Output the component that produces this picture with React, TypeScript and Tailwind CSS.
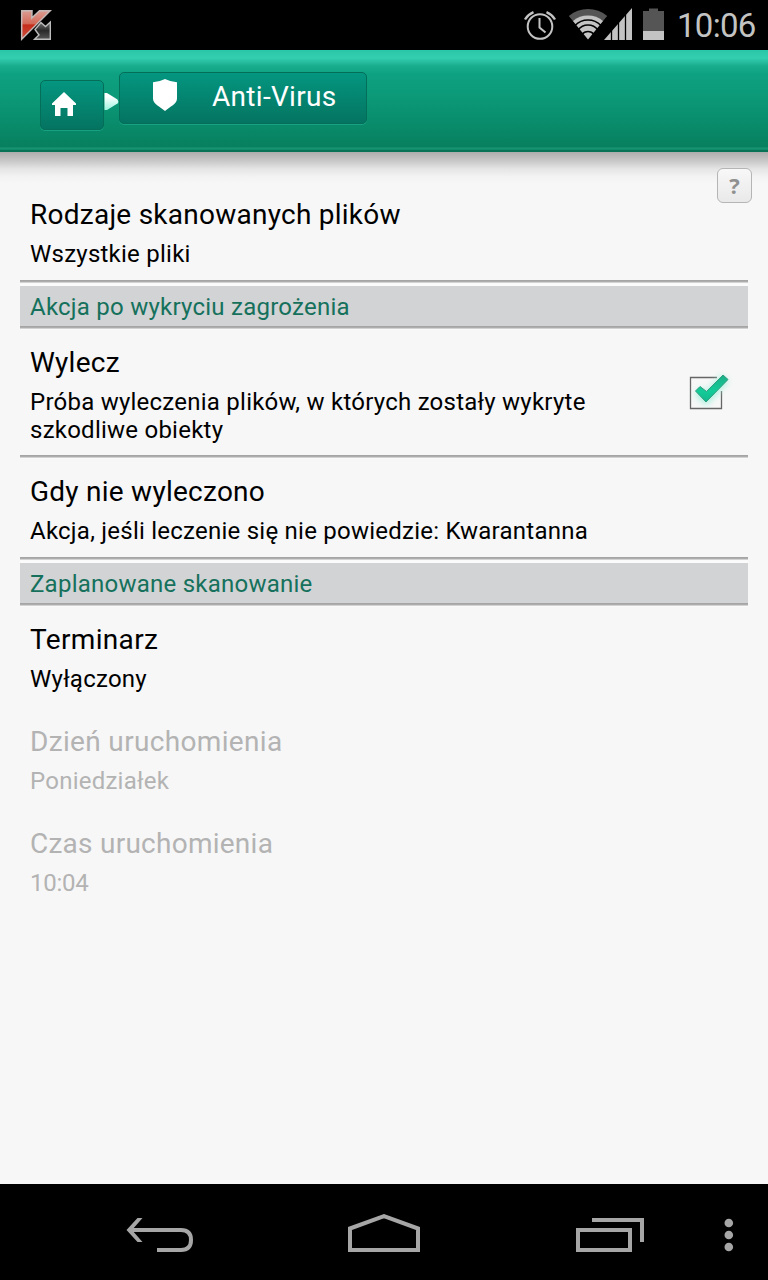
import React from "react";

type RowProps = {
  title: string;
  summary: React.ReactNode;
  titleTracking?: string;
  summaryTracking?: string;
  disabled?: boolean;
  tall?: boolean;
  children?: React.ReactNode;
};

function Row({
  title,
  summary,
  titleTracking = "tracking-[0.25px]",
  summaryTracking = "tracking-[0.24px]",
  disabled,
  tall,
  children,
}: RowProps) {
  return (
    <div className={`flex shrink-0 justify-between pl-[10px] pt-[15px] ${tall ? "h-[125px]" : "h-[98px]"} ${disabled ? "text-[#b3b3b3]" : "text-black"}`}>
      <div className="whitespace-nowrap">
        <div className={`w-max text-[28px] leading-[36px] ${titleTracking}`}>{title}</div>
        <div className={`mt-[7px] w-max text-[24px] leading-[28px] ${summaryTracking}`}>{summary}</div>
      </div>
      {children}
    </div>
  );
}

function Divider() {
  return <div className="h-1 shrink-0 bg-[linear-gradient(to_bottom,#a5a5a5_0_1px,#adadad_1px_2px,#d2d2d2_2px_3px,#fafafa_3px_4px)]" />;
}

function Section({ label, tracking }: { label: string; tracking: string }) {
  return (
    <div className="shrink-0">
      <Divider />
      <div className="h-0.5 bg-[#fbfbfb]" />
      <div className="h-10 bg-[#d1d3d4] pl-[10px] text-[24px] leading-[43px] text-[#15715c]">
        <span className={tracking}>{label}</span>
      </div>
      <Divider />
    </div>
  );
}

function StatusBar() {
  return (
    <div className="flex h-[50px] shrink-0 items-start justify-between bg-black">
      <svg width="60" height="50" viewBox="0 0 60 50">
        <defs>
          <linearGradient id="red" x1="0" y1="0" x2="0" y2="1">
            <stop offset="0" stopColor="#dc9d94" />
            <stop offset=".45" stopColor="#d36a59" />
            <stop offset=".5" stopColor="#c52c1a" />
            <stop offset="1" stopColor="#cf5140" />
          </linearGradient>
          <linearGradient id="steel" x1="0" y1="0" x2="0" y2="1">
            <stop offset="0" stopColor="#777" />
            <stop offset=".5" stopColor="#292929" />
            <stop offset="1" stopColor="#555" />
          </linearGradient>
        </defs>
        <path d="M41 22.500L45.500 26.500L50.300 22V39.300H34.500L39 35L35 29.500Z" fill="url(#steel)" stroke="#bdbdbd" strokeWidth="1.400" />
        <path d="M21.700 10.700H32L31.800 18L39.500 10.700H50.200L21.700 39.300Z" fill="url(#red)" stroke="#c4b9b7" strokeWidth="1.500" />
      </svg>
      <div className="flex">
        <svg width="150" height="50" viewBox="520 0 150 50">
          <g fill="none" stroke="#c3c3c3">
            <circle cx="540" cy="26.500" r="12.300" strokeWidth="2" />
            <path d="M539.500 18V27.500L545.500 32.500" strokeWidth="2" />
            <path d="M525 19.500Q528 14.500 533.500 12.200M546.500 12.200Q552 14.500 555 19.500" strokeWidth="2.400" />
          </g>
          <path d="M568.800 16A30 30 0 0 1 607.200 16L588 39Z" fill="#555" />
          <path d="M573 21A23.500 23.500 0 0 1 603 21L588 39.500Z" fill="#c3c3c3" />
          <path d="M575 25.500A18 18 0 0 1 601 25.500M578 30A12.500 12.500 0 0 1 598 30M582 34.500A7.500 7.500 0 0 1 594 34.500" fill="none" stroke="#000" strokeWidth="1.500" />
          <path d="M604 40L632 8V40Z" fill="#c3c3c3" />
          <path d="M611.500 8V41M618.500 8V41M625.500 8V41" stroke="#000" strokeWidth="1.300" />
          <path d="M643 11H649V8.500H658V11H664V31H643Z" fill="#555" />
          <path d="M643 31H664V40H643Z" fill="#c3c3c3" />
        </svg>
        <div className="w-[98px] pl-[7px] pt-[2px] text-[33px] leading-[48px] text-[#c3c3c3]"><span className="tracking-[-0.7px]">10:06</span></div>
      </div>
    </div>
  );
}

const button = "flex shrink-0 rounded-[5px] border border-[#046e59] bg-linear-to-b from-[#049680] to-[#047461] shadow-[0_1px_0_#18a183]";

function Header() {
  return (
    <header className="flex h-[102px] shrink-0 items-start border-b-2 border-[#087256] bg-[linear-gradient(to_bottom,#29c7a7_0,#34ceb1_8px,#19ad8d_16px,#0ea181_24px,#0b9877_50px,#07805f_96px,#07805f_97px,#1b9674_98px,#0d8968_100px)] pl-10">
      <div className={`${button} mt-[30px] h-[50px] w-[64px]`}>
        <svg width="62" height="48" viewBox="41 81 62 48">
          <path d="M64 92L52 103.500V105H55V115.500Q55 116 55.500 116H60.500V108H67.500V116H72.500Q73 116 73 115.500V105H76V103.500Z" fill="white" />
        </svg>
      </div>
      <svg className="mt-[42px]" width="15" height="20" viewBox="104 92 15 20">
        <defs>
          <linearGradient id="tip" x1="0" y1="0" x2="0" y2="1">
            <stop offset=".2" stopColor="#fff" />
            <stop offset="1" stopColor="#9df3df" />
          </linearGradient>
        </defs>
        <path d="M104.500 93H107L117.500 99.500Q119 101.500 117.500 103.500L107 110H104.500Z" fill="url(#tip)" />
      </svg>
      <div className={`${button} mt-[22px] h-[52px] w-[248px]`}>
        <svg className="shrink-0" width="92" height="50" viewBox="120 73 92 50">
          <path d="M165 79Q171 82 177 82.300V98.500C177 104 170 106.500 165 111C160 106.500 153 104 153 98.500V82.300Q159 82 165 79Z" fill="white" />
        </svg>
        <span className="whitespace-nowrap text-[28px] leading-[47px] text-white tracking-[0.3px]">Anti-Virus</span>
      </div>
    </header>
  );
}

function Checkbox() {
  return (
    <svg className="mr-[10px] mt-[19px]" width="60" height="60" viewBox="678 364 60 60">
      <defs>
        <filter id="glow" x="-40%" y="-40%" width="180%" height="180%">
          <feGaussianBlur stdDeviation="3" />
        </filter>
        <linearGradient id="tick" x1="0" y1="0" x2="0" y2="1">
          <stop offset="0" stopColor="#1bad86" />
          <stop offset=".6" stopColor="#13cc98" />
          <stop offset="1" stopColor="#14b78c" />
        </linearGradient>
      </defs>
      <path d="M717 377.500H690.500V408.500H721.500V391" fill="none" stroke="#666" strokeWidth="1.300" />
      <path d="M698 391L706 399L725 378" fill="none" stroke="#a5f0dc" strokeWidth="9" filter="url(#glow)" />
      <path d="M695.500 391L700 386.500L706.500 391.500L723 375L728 379.500L706 402Z" fill="url(#tick)" stroke="#329c80" strokeWidth="1" strokeLinejoin="round" />
    </svg>
  );
}

function NavBar() {
  return (
    <nav className="flex h-24 shrink-0 items-center bg-black">
      <svg width="768" height="96" viewBox="0 1184 768 96">
        <g fill="none" stroke="#a6a6a6" strokeWidth="4">
          <path d="M130 1230H181Q191 1230 191 1240Q191 1250 181 1250H157" />
          <path d="M137.500 1218H142.500L132 1230L142.500 1242H137.500L126.500 1230Z" fill="#a6a6a6" stroke="none" />
          <path d="M350 1228.500L384 1216.200L418 1228.500V1250H350Z" />
          <path d="M578 1230H630V1250H578Z" />
          <path d="M592 1220H642V1242" />
        </g>
        <g fill="#a6a6a6">
          <circle cx="728.800" cy="1223" r="4.300" />
          <circle cx="728.800" cy="1235" r="4.300" />
          <circle cx="728.800" cy="1247" r="4.300" />
        </g>
      </svg>
    </nav>
  );
}

export default function App() {
  return (
    <div className="flex h-[1280px] w-[768px] flex-col overflow-hidden bg-[#f7f7f7] font-['Roboto',sans-serif]">
      <StatusBar />
      <Header />
      <main className="relative flex flex-1 flex-col bg-[linear-gradient(to_bottom,#adadad_0,#c5c5c5_8px,#e5e5e5_17px,#f3f3f3_25px,#f7f7f7_32px)] pl-5 pr-5 pt-[30px]">
        <button className="absolute right-4 top-4 flex h-[35px] w-[35px] items-center justify-center rounded-[6px] border border-[#b5b5b5] bg-linear-to-b from-[#f8f8f8] to-[#e9e9e9] font-['Open_Sans',sans-serif] text-[22px] font-bold text-[#909090]">?</button>
        <Row title="Rodzaje skanowanych plików" summary="Wszystkie pliki" />
        <Section label="Akcja po wykryciu zagrożenia" tracking="tracking-[0.24px]" />
        <Row tall title="Wylecz" summary={<>Próba wyleczenia plików, w których zostały wykryte<br />szkodliwe obiekty</>}>
          <Checkbox />
        </Row>
        <Divider />
        <Row title="Gdy nie wyleczono" summary="Akcja, jeśli leczenie się nie powiedzie: Kwarantanna" />
        <Section label="Zaplanowane skanowanie" tracking="tracking-[0.24px]" />
        <Row title="Terminarz" summary="Wyłączony" titleTracking="tracking-[0.35px]" />
        <div className="mt-1 flex flex-col gap-1">
          <Row disabled title="Dzień uruchomienia" summary="Poniedziałek" titleTracking="tracking-[0.34px]" />
          <Row disabled title="Czas uruchomienia" summary="10:04" summaryTracking="tracking-[-0.25px]" />
        </div>
      </main>
      <NavBar />
    </div>
  );
}
